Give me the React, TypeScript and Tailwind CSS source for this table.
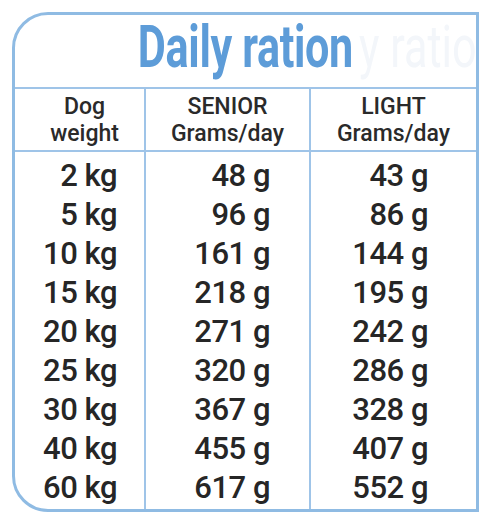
const rows: [string, string, string][] = [
  ['2 kg', '48 g', '43 g'],
  ['5 kg', '96 g', '86 g'],
  ['10 kg', '161 g', '144 g'],
  ['15 kg', '218 g', '195 g'],
  ['20 kg', '271 g', '242 g'],
  ['25 kg', '320 g', '286 g'],
  ['30 kg', '367 g', '328 g'],
  ['40 kg', '455 g', '407 g'],
  ['60 kg', '617 g', '552 g'],
];

export default function App() {
  return (
    <div className="w-[480px] h-[520px] bg-white pl-[12px] pt-[12px] font-['Roboto',sans-serif]">
      <div className="w-[467px] h-[500px] border-[3px] border-[#8fbbe3] rounded-tl-[36px] rounded-bl-[36px] overflow-hidden flex flex-col">
        {/* title */}
        <div className="relative h-[74px] shrink-0 border-b-2 border-[#9fc4e8] flex justify-center pt-[2px]">
          <span className="relative inline-block text-[60px] leading-[60px] font-bold text-[#5d9cd8] scale-x-[0.72] whitespace-nowrap tracking-[-0.5px]">
            Daily ration
          </span>
          <span className="absolute left-[344px] top-[2px] text-[60px] leading-[60px] font-normal text-[#f3f6fa] scale-x-[0.72] origin-left whitespace-nowrap">
            y ratio
          </span>
        </div>

        {/* header */}
        <div className="grid grid-cols-[131px_165px_1fr] h-[63px] shrink-0 border-b-2 border-[#9fc4e8] text-[#2a2a2a] text-[23px] leading-[27px] font-medium text-center">
          <div className="flex flex-col items-center justify-center pl-[10px] border-r-2 border-[#9fc4e8]">
            <span>Dog</span>
            <span>weight</span>
          </div>
          <div className="flex flex-col items-center justify-center border-r-2 border-[#9fc4e8]">
            <span>SENIOR</span>
            <span>Grams/day</span>
          </div>
          <div className="flex flex-col items-center justify-center">
            <span>LIGHT</span>
            <span>Grams/day</span>
          </div>
        </div>

        {/* body */}
        <div className="grid grid-cols-[131px_165px_1fr] flex-1 text-[#262626] text-[31px] font-medium">
          <div className="border-r-2 border-[#9fc4e8] pt-[4px] pr-[27px] text-right">
            {rows.map((r) => (
              <div key={r[0]} className="h-[39px] leading-[39px] tracking-[-0.5px]">{r[0]}</div>
            ))}
          </div>
          <div className="border-r-2 border-[#9fc4e8] pt-[4px] pr-[39px] text-right">
            {rows.map((r) => (
              <div key={r[0]} className="h-[39px] leading-[39px] tracking-[-0.5px]">{r[1]}</div>
            ))}
          </div>
          <div className="pt-[4px] pr-[48px] text-right">
            {rows.map((r) => (
              <div key={r[0]} className="h-[39px] leading-[39px] tracking-[-0.5px]">{r[2]}</div>
            ))}
          </div>
        </div>
      </div>
    </div>
  );
}
